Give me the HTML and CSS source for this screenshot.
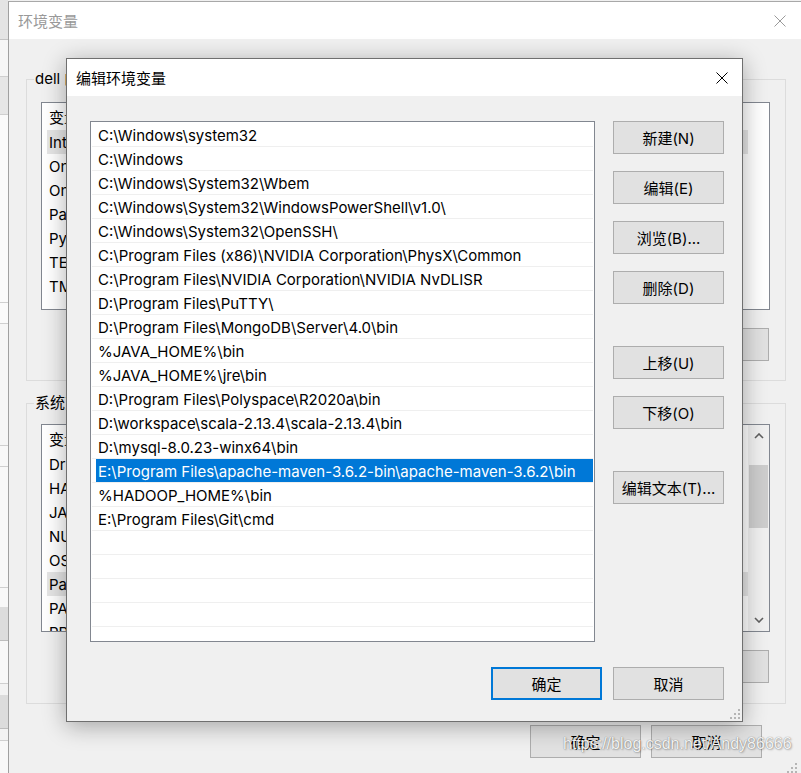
FILE: index.html
```html
<!DOCTYPE html>
<html lang="zh-CN">
<head>
<meta charset="utf-8">
<title>编辑环境变量</title>
<link rel="stylesheet" href="styles.css">
</head>
<body>
<div class="desk">
  <div class="behind"></div>
  <div class="outer">
    <div class="o-title">
      <span class="o-title-text">环境变量</span>
      <svg class="o-close" width="12" height="12" viewBox="0 0 12 12"><path d="M0.5 0.5L11.5 11.5M11.5 0.5L0.5 11.5" stroke="#9a9a9a" stroke-width="1"/></svg>
    </div>
    <div class="o-body">
      <div class="group g1">
        <span class="legend">dell 的用户变量(U)</span>
        <div class="lv">
          <div class="lv-head"><span class="c1">变量</span><span class="c2">值</span></div>
          <div class="lv-row hl"><span class="c1">IntelliJ IDEA</span><span class="c2">C:\Program Files\JetBrains\bin;</span></div>
          <div class="lv-row"><span class="c1">OneDrive</span><span class="c2">C:\Users\dell\OneDrive</span></div>
          <div class="lv-row"><span class="c1">OneDriveConsumer</span><span class="c2">C:\Users\dell\OneDrive</span></div>
          <div class="lv-row"><span class="c1">Path</span><span class="c2">C:\Users\dell\AppData\Local\Microsoft\WindowsApps;</span></div>
          <div class="lv-row"><span class="c1">PyCharm</span><span class="c2">C:\Program Files\JetBrains\PyCharm\bin;</span></div>
          <div class="lv-row"><span class="c1">TEMP</span><span class="c2">C:\Users\dell\AppData\Local\Temp</span></div>
          <div class="lv-row"><span class="c1">TMP</span><span class="c2">C:\Users\dell\AppData\Local\Temp</span></div>
        </div>
        <div class="btnrow">
          <button class="btn">新建(N)...</button>
          <button class="btn">编辑(E)...</button>
          <button class="btn">删除(D)</button>
        </div>
      </div>
      <div class="group g2">
        <span class="legend">系统变量(S)</span>
        <div class="lv lv-sb">
          <div class="lv-rows">
            <div class="lv-head"><span class="c1">变量</span><span class="c2">值</span></div>
            <div class="lv-row"><span class="c1">DriverData</span><span class="c2">C:\Windows\System32\Drivers\DriverData</span></div>
            <div class="lv-row"><span class="c1">HADOOP_HOME</span><span class="c2">E:\hadoop</span></div>
            <div class="lv-row"><span class="c1">JAVA_HOME</span><span class="c2">C:\Program Files\Java\jdk1.8</span></div>
            <div class="lv-row"><span class="c1">NUMBER_OF_PROCESSORS</span><span class="c2">8</span></div>
            <div class="lv-row"><span class="c1">OS</span><span class="c2">Windows_NT</span></div>
            <div class="lv-row hl"><span class="c1">Path</span><span class="c2">C:\Windows\system32;C:\Windows;</span></div>
            <div class="lv-row"><span class="c1">PATHEXT</span><span class="c2">.COM;.EXE;.BAT;.CMD</span></div>
            <div class="lv-row"><span class="c1">PROCESSOR_ARCHITECTURE</span><span class="c2">AMD64</span></div>
          </div>
          <div class="sb">
            <div class="sb-btn"><svg width="10" height="6" viewBox="0 0 10 6"><path d="M1 5L5 1L9 5" fill="none" stroke="#606060" stroke-width="1.6"/></svg></div>
            <div class="sb-track"><div class="sb-thumb"></div></div>
            <div class="sb-btn"><svg width="10" height="6" viewBox="0 0 10 6"><path d="M1 1L5 5L9 1" fill="none" stroke="#606060" stroke-width="1.6"/></svg></div>
          </div>
        </div>
        <div class="btnrow">
          <button class="btn">新建(W)...</button>
          <button class="btn">编辑(I)...</button>
          <button class="btn">删除(L)</button>
        </div>
      </div>
      <div class="o-foot">
        <button class="btn">确定</button>
        <button class="btn">取消</button>
      </div>
    </div>
  </div>
</div>

<div class="dialog">
  <div class="d-title">
    <span class="d-title-text">编辑环境变量</span>
    <svg class="d-close" width="12" height="12" viewBox="0 0 12 12"><path d="M0.5 0.5L11.5 11.5M11.5 0.5L0.5 11.5" stroke="#000" stroke-width="1"/></svg>
  </div>
  <div class="d-body">
    <div class="d-main">
      <div class="d-list">
        <div class="d-row"><span class="d-cell">C:\Windows\system32</span></div>
        <div class="d-row"><span class="d-cell">C:\Windows</span></div>
        <div class="d-row"><span class="d-cell">C:\Windows\System32\Wbem</span></div>
        <div class="d-row"><span class="d-cell">C:\Windows\System32\WindowsPowerShell\v1.0\</span></div>
        <div class="d-row"><span class="d-cell">C:\Windows\System32\OpenSSH\</span></div>
        <div class="d-row"><span class="d-cell">C:\Program Files (x86)\NVIDIA Corporation\PhysX\Common</span></div>
        <div class="d-row"><span class="d-cell">C:\Program Files\NVIDIA Corporation\NVIDIA NvDLISR</span></div>
        <div class="d-row"><span class="d-cell">D:\Program Files\PuTTY\</span></div>
        <div class="d-row"><span class="d-cell">D:\Program Files\MongoDB\Server\4.0\bin</span></div>
        <div class="d-row"><span class="d-cell">%JAVA_HOME%\bin</span></div>
        <div class="d-row"><span class="d-cell">%JAVA_HOME%\jre\bin</span></div>
        <div class="d-row"><span class="d-cell">D:\Program Files\Polyspace\R2020a\bin</span></div>
        <div class="d-row"><span class="d-cell">D:\workspace\scala-2.13.4\scala-2.13.4\bin</span></div>
        <div class="d-row"><span class="d-cell">D:\mysql-8.0.23-winx64\bin</span></div>
        <div class="d-row sel"><span class="d-cell">E:\Program Files\apache-maven-3.6.2-bin\apache-maven-3.6.2\bin</span></div>
        <div class="d-row"><span class="d-cell">%HADOOP_HOME%\bin</span></div>
        <div class="d-row"><span class="d-cell">E:\Program Files\Git\cmd</span></div>
        <div class="d-row"><span class="d-cell"></span></div>
        <div class="d-row"><span class="d-cell"></span></div>
        <div class="d-row"><span class="d-cell"></span></div>
        <div class="d-row"><span class="d-cell"></span></div>
        <div class="d-row"><span class="d-cell"></span></div>
      </div>
      <div class="d-btns">
        <button class="btn">新建(N)</button>
        <button class="btn">编辑(E)</button>
        <button class="btn">浏览(B)...</button>
        <button class="btn">删除(D)</button>
        <button class="btn gap-lg">上移(U)</button>
        <button class="btn">下移(O)</button>
        <button class="btn gap-lg">编辑文本(T)...</button>
      </div>
    </div>
    <div class="d-foot">
      <button class="btn focus">确定</button>
      <button class="btn">取消</button>
    </div>
  </div>
  <svg class="grip d-grip" width="12" height="12" viewBox="0 0 12 12"><g fill="#b5b5b5"><rect x="9" y="1" width="2" height="2"/><rect x="5" y="5" width="2" height="2"/><rect x="9" y="5" width="2" height="2"/><rect x="1" y="9" width="2" height="2"/><rect x="5" y="9" width="2" height="2"/><rect x="9" y="9" width="2" height="2"/></g></svg>
</div>

<svg class="grip o-grip" width="12" height="12" viewBox="0 0 12 12"><g fill="#b5b5b5"><rect x="9" y="1" width="2" height="2"/><rect x="5" y="5" width="2" height="2"/><rect x="9" y="5" width="2" height="2"/><rect x="1" y="9" width="2" height="2"/><rect x="5" y="9" width="2" height="2"/><rect x="9" y="9" width="2" height="2"/></g></svg>
<div class="watermark">https://blog.csdn.net/Andy86666</div>
</body>
</html>
```

FILE: styles.css
```css
* { box-sizing: border-box; margin: 0; padding: 0; }
html, body { width: 801px; height: 773px; overflow: hidden; }
body {
  position: relative;
  background: #f0f0f0;
  font-family: "Inter", "Noto Sans CJK SC", sans-serif;
  font-size: 15px;
  color: #000;
}
.desk { display: flex; height: 773px; }
.behind {
  width: 8px;
  flex: none;
  background: linear-gradient(to bottom,
    #e4e4e4 0 39px, #c4c4c4 39px 40px, #f6f6f6 40px 76px, #cfcfcf 76px 77px,
    #e6e6e6 77px 114px, #cfcfcf 114px 115px, #fafafa 115px 302px, #cfcfcf 302px 303px,
    #fafafa 303px 323px, #cfcfcf 323px 324px, #f6f6f6 324px 445px, #cfcfcf 445px 446px,
    #f8f8f8 446px 466px, #cfcfcf 466px 467px, #f8f8f8 467px 587px, #cfcfcf 587px 588px,
    #f8f8f8 588px 607px, #dcdcdc 607px 640px, #bdbdbd 640px 641px, #f8f8f8 641px 683px,
    #cfcfcf 683px 684px, #f3f3f3 684px 695px, #dcdcdc 695px 728px, #bdbdbd 728px 729px,
    #f3f3f3 729px 740px, #cfcfcf 740px 741px, #f8f8f8 741px 773px);
}
.outer {
  flex: 1;
  margin-top: 1px;
  border-top: 1px solid #a8a8a8;
  border-left: 1px solid #a0a0a0;
  display: flex;
  flex-direction: column;
  background: #f0f0f0;
}
.o-title {
  height: 37px;
  flex: none;
  background: #fff;
  display: flex;
  align-items: center;
  justify-content: space-between;
  padding: 0 15px 0 9px;
}
.o-title-text { color: #999; font-size: 15px; }
.o-body { padding: 40px 15px 0 17px; }
.group { position: relative; border: 1px solid #dcdcdc; }
.g1 { padding: 22px 15px 19px 14px; }
.g2 { margin-top: 22px; padding: 20px 15px 20px 14px; }
.legend {
  position: absolute;
  top: -11px;
  left: 7px;
  line-height: 20px;
  padding: 0 1px;
  background: #f0f0f0;
  white-space: nowrap;
}
.lv {
  height: 208px;
  border: 1px solid #828790;
  background: #fff;
  overflow: hidden;
}
.lv-sb { display: flex; }
.lv-rows { flex: 1; min-width: 0; }
.lv-head, .lv-row {
  display: flex;
  white-space: nowrap;
  overflow: hidden;
}
.lv-head { height: 27px; align-items: center; padding-left: 7px; }
.lv-row { height: 24px; align-items: center; margin-left: 5px; margin-right: 21px; padding-left: 2px; }
.lv-sb .lv-row { margin-right: 0; }
.lv-row.hl { background: #e5e5e5; }
.c1 { width: 170px; flex: none; overflow: hidden; }
.c2 { width: 500px; flex: none; overflow: hidden; }
.sb {
  width: 21px;
  flex: none;
  background: #f0f0f0;
  display: flex;
  flex-direction: column;
}
.sb-btn { height: 22px; display: flex; align-items: center; justify-content: center; }
.sb-track { flex: 1; padding: 18px 1px 0 1px; }
.sb-thumb { height: 63px; background: #cdcdcd; }
.btnrow { display: flex; justify-content: flex-end; gap: 10px; margin-top: 18px; padding-right: 1px; }
.btn {
  width: 111px;
  height: 33px;
  background: #e1e1e1;
  border: 1px solid #adadad;
  font: inherit;
  font-size: 15px;
  color: #000;
  text-align: center;
  white-space: nowrap;
}
.btn.focus { border: 2px solid #0078d7; }
.o-foot { display: flex; gap: 10px; margin-top: 21px; padding-left: 504px; }

.dialog {
  position: absolute;
  left: 66px;
  top: 58px;
  width: 677px;
  height: 664px;
  border: 1px solid #6f6f6f;
  background: #f0f0f0;
  box-shadow: 0 4px 22px rgba(0, 0, 0, 0.32);
  display: flex;
  flex-direction: column;
}
.d-title {
  height: 37px;
  flex: none;
  background: #fff;
  display: flex;
  align-items: center;
  justify-content: space-between;
  padding: 0 14px 0 9px;
}
.d-body { flex: 1; padding: 25px 17px 20px 23px; display: flex; flex-direction: column; }
.d-main { display: flex; gap: 18px; }
.d-list {
  width: 505px;
  height: 521px;
  flex: none;
  border: 1px solid #828790;
  background: #fff;
  padding-top: 1px;
  overflow: hidden;
}
.d-row {
  height: 24px;
  margin: 0 1px;
  border-bottom: 1px solid #efefef;
  padding-left: 4px;
  display: flex;
}
.d-cell {
  flex: 1;
  height: 23px;
  padding: 1px 0 0 2px;
  line-height: 23px;
  white-space: nowrap;
  overflow: hidden;
}
.d-row.sel .d-cell { background: #0078d7; color: #fff; }
.d-btns { display: flex; flex-direction: column; gap: 17px; }
.d-btns .gap-lg { margin-top: 25px; }
.d-foot { display: flex; gap: 11px; margin-top: 25px; padding-left: 401px; }
.grip { position: absolute; }
.d-grip { right: 1px; bottom: 1px; }
.o-grip { left: 786px; top: 762px; }
.watermark {
  position: absolute;
  left: 563px;
  top: 735px;
  font-family: "Liberation Sans", sans-serif;
  font-size: 16px;
  line-height: 18px;
  color: rgba(255, 255, 255, 0.92);
  text-shadow: 0 0 1px rgba(0,0,0,0.5), 1px 1px 2px rgba(0,0,0,0.25);
  white-space: nowrap;
}
```
